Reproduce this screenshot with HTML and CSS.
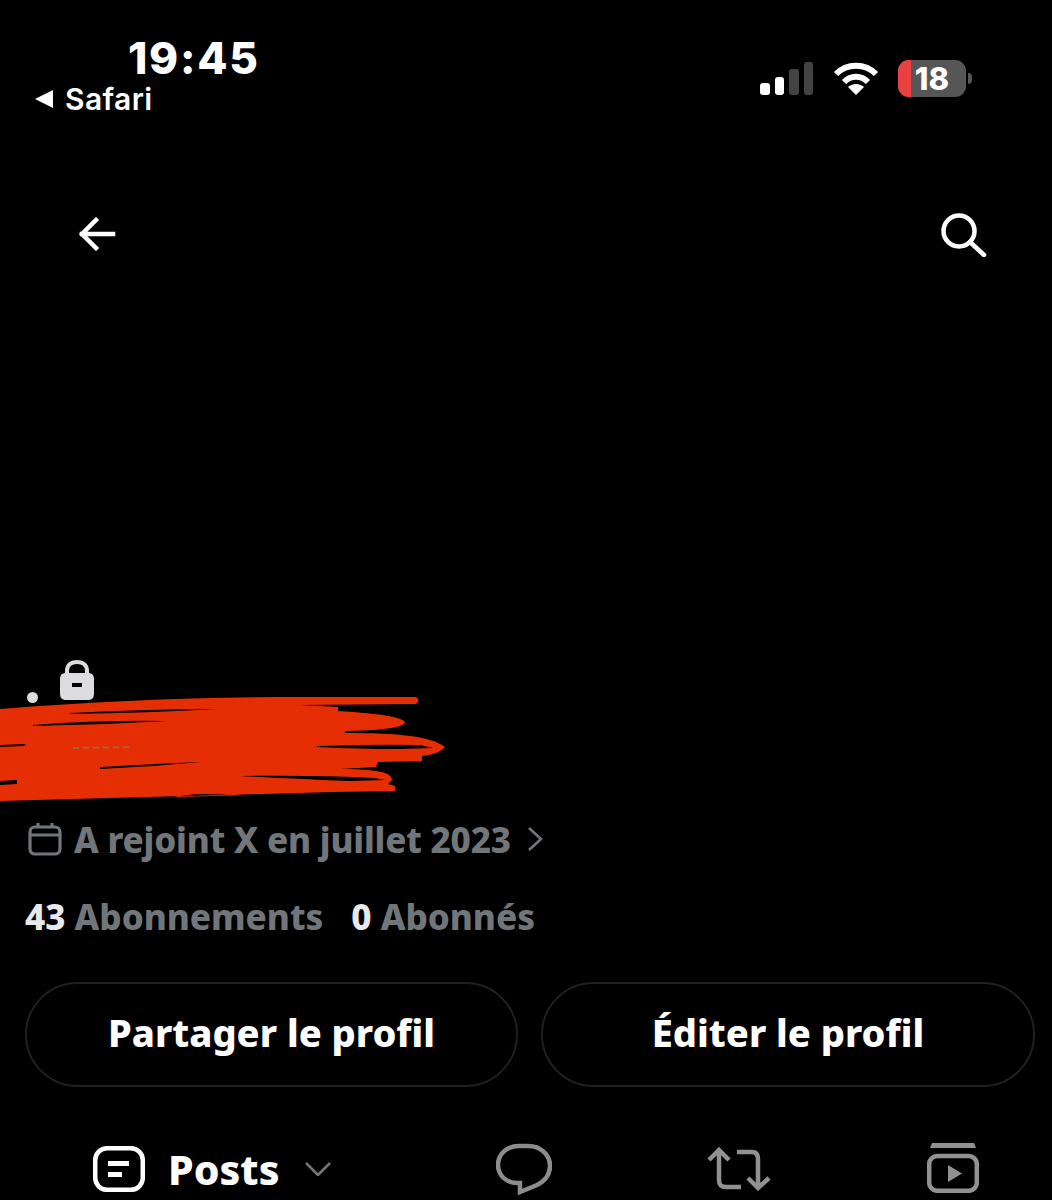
FILE: index.html
```html
<!DOCTYPE html>
<html lang="fr">
<head>
<meta charset="utf-8">
<title>Profil</title>
<link rel="stylesheet" href="styles.css">
</head>
<body>
<main class="screen">
  <header class="status">
    <div class="status-left">
      <div class="clock">19:45</div>
      <div class="back-app">
        <svg class="back-tri" viewBox="0 0 18 18"><path d="M0 9 18 0V18Z"/></svg>
        <span>Safari</span>
      </div>
    </div>
    <div class="status-right">
      <div class="signal">
        <i class="bar bar-1"></i><i class="bar bar-2"></i><i class="bar bar-3"></i><i class="bar bar-4"></i>
      </div>
      <svg class="wifi" viewBox="0 0 46 34" fill="none" stroke="#fff" stroke-width="6">
        <path d="M3 13C14 2 32 2 43 13"/>
        <path d="M11 21C18 14 28 14 35 21"/>
        <path d="M15 26 23 34 31 26C26 22 20 22 15 26Z" fill="#fff" stroke="none"/>
      </svg>
      <div class="battery">
        <i class="battery-low"></i>
        <span class="battery-level">18</span>
      </div>
      <i class="battery-tip"></i>
    </div>
  </header>

  <nav class="topnav">
    <svg class="nav-back" viewBox="0 0 38 34" fill="none" stroke="#fff" stroke-width="4.5" stroke-linecap="square">
      <path d="M35 17H4M18 3 4 17 18 31"/>
    </svg>
    <svg class="nav-search" viewBox="0 0 46 44" fill="none" stroke="#fff" stroke-width="4.5">
      <circle cx="18" cy="18" r="15.500"/>
      <path d="M29 29 43 42" stroke-linecap="round"/>
    </svg>
  </nav>

  <section class="identity">
    <div class="handle">
      <i class="handle-dot"></i>
      <svg class="lock" viewBox="0 0 36 41">
        <path d="M8 16V11C8 5 12 2 18 2S28 5 28 11V16" fill="none" stroke="#dcdcde" stroke-width="4"/>
        <path d="M7 13H29C33 13 35 15 35 19V33C35 38 33 40 29 40H7C3 40 1 38 1 33V19C1 15 3 13 7 13ZM13 23V27H23V23Z" fill="#dcdcde" fill-rule="evenodd"/>
      </svg>
    </div>
    <svg class="scribble" viewBox="0 0 446 106">
      <path fill="#e52e04" fill-rule="evenodd" d="M0 14C100 6 200 2 300 2L416 2Q421 5 416 9L300 10 338 12 338 16Q405 20 405 28Q400 35 345 36L345 38C400 38 430 41 445 52C440 58 430 60 422 61L422 66 378 67 376 72 340 74C380 74 392 78 392 85L388 89 395 91 395 96 333 97 0 106Z
      M70 18Q150 14 217 14Q150 18 70 19Z
      M33 30Q100 25 167 26Q100 30 33 31Z
      M317 51Q380 49 420 50L433 53 400 54Q360 54 317 52Z
      M100 72Q150 69 200 67Q150 72 100 74Z
      M240 81Q320 80 375 83L385 85 350 86Q300 84 240 81Z
      M0 86 17 85V89L0 90Z
      M0 50 26 49 24 51 0 52Z
      M175 102 250 100 200 99Q185 100 175 102Z"/>
      <path d="M73 53 133 52" stroke="#8d6f62" stroke-width="1.500" stroke-dasharray="6 4" fill="none"/>
    </svg>
  </section>

  <div class="joined">
    <svg class="calendar" viewBox="0 0 34 34" fill="none" stroke="#71767b" stroke-width="3.200">
      <rect x="2" y="5" width="30" height="27" rx="5"/>
      <path d="M2 13H32M10 1V6M24 1V6"/>
    </svg>
    <span>A rejoint X en juillet 2023</span>
    <svg class="chevron-right" viewBox="0 0 16 24" fill="none" stroke="#71767b" stroke-width="2.600">
      <path d="M2 1 14 12 2 23"/>
    </svg>
  </div>

  <div class="stats">
    <span class="stat"><b>43</b> Abonnements</span>
    <span class="stat"><b>0</b> Abonnés</span>
  </div>

  <div class="actions">
    <button class="action">Partager le profil</button>
    <button class="action">Éditer le profil</button>
  </div>

  <div class="tabs">
    <div class="tab-posts">
      <svg class="posts-icon" viewBox="0 0 52 46" fill="none" stroke="#fff" stroke-width="4.500">
        <rect x="2.200" y="2.200" width="47.600" height="41.600" rx="12"/>
        <path d="M15 17.500H36M15 28.500H29" stroke-width="5"/>
      </svg>
      <span class="posts-label">Posts</span>
      <svg class="chevron-down" viewBox="0 0 26 14" fill="none" stroke="#71767b" stroke-width="2.600">
        <path d="M1 1 13 13 25 1"/>
      </svg>
    </div>
    <svg class="tab-icon reply" viewBox="0 0 56 52" fill="none" stroke="#8c8c8c" stroke-width="4.500">
      <path d="M23 3H32C45 3 54 12 54 23C54 32 49 38 41 42L24 49V40H21C10 40 2 32 2 22C2 11 11 3 23 3Z"/>
    </svg>
    <svg class="tab-icon repost" viewBox="0 0 64 44" fill="none" stroke="#919191" stroke-width="4.500">
      <path d="M2 13 12 3 22 13M12 3V33C12 38 14 40 19 40H34"/>
      <path d="M30 5H45C49 5 51 7 51 12V41M41 31 51 41 62 31"/>
    </svg>
    <svg class="tab-icon video" viewBox="0 0 52 50" fill="#919191" stroke="none">
      <path d="M5 0H47L49 5H3Z"/>
      <rect x="2.200" y="13" width="47.600" height="34.800" rx="8" fill="none" stroke="#919191" stroke-width="4.500"/>
      <path d="M21 22 35 30.500 21 39Z"/>
    </svg>
  </div>
</main>
</body>
</html>
```

FILE: styles.css
```css
* { box-sizing: border-box; }

html, body {
  margin: 0;
  background: #000;
}

.screen {
  width: 1052px;
  height: 1200px;
  overflow: hidden;
  background: #000;
  color: #fff;
  font-family: "Noto Sans", "Liberation Sans", sans-serif;
}

/* Phone status bar */
.status {
  height: 130px;
  display: flex;
  justify-content: space-between;
  padding: 33px 80px 0 35px;
}

.status-left {
  display: flex;
  flex-direction: column;
  font-family: Inter, "Liberation Sans", sans-serif;
}

.clock {
  margin-left: 93px;
  font-size: 44px;
  line-height: 50px;
  font-weight: 800;
  letter-spacing: 1.7px;
}

.back-app {
  display: flex;
  align-items: center;
  gap: 12px;
  font-size: 30px;
  line-height: 32px;
  font-weight: 600;
  letter-spacing: 0.4px;
}

.back-tri {
  width: 18px;
  height: 18px;
  fill: #fff;
}

.status-right {
  display: flex;
  align-items: flex-start;
  padding-top: 27px;
}

.signal {
  display: flex;
  align-items: flex-end;
  gap: 5px;
  height: 33px;
  margin-top: 2px;
}

.bar {
  width: 9.5px;
  border-radius: 3px;
  background: #fff;
}

.bar-1 { height: 12px; }
.bar-2 { height: 18px; }
.bar-3 { height: 26px; background: #434343; }
.bar-4 { height: 33px; background: #434343; }

.wifi {
  width: 46px;
  height: 34px;
  margin: 1px 19px 0 20px;
}

.battery {
  position: relative;
  width: 68px;
  height: 37px;
  border-radius: 11px;
  overflow: hidden;
  background: #565656;
  display: flex;
  justify-content: center;
  align-items: center;
}

.battery-low {
  position: absolute;
  left: 0;
  top: 0;
  bottom: 0;
  width: 13px;
  background: #ea4040;
}

.battery-level {
  position: relative;
  font-family: Inter, "Liberation Sans", sans-serif;
  font-size: 31px;
  font-weight: 800;
  line-height: 37px;
}

.battery-tip {
  width: 4px;
  height: 11px;
  margin: 13px 0 0 2px;
  border-radius: 0 4px 4px 0;
  background: #565656;
}

/* Back and search row above the banner */
.topnav {
  height: 530px;
  display: flex;
  justify-content: space-between;
  align-items: flex-start;
  padding: 87px 65px 0 78px;
}

.nav-back {
  width: 38px;
  height: 34px;
}

.nav-search {
  width: 46px;
  height: 44px;
  margin-top: -4px;
}

/* Handle, with the display name struck out beneath it */
.identity {
  position: relative;
  height: 155px;
}

.handle {
  display: flex;
  align-items: flex-end;
  gap: 21px;
  padding-left: 27px;
  height: 41px;
}

.handle-dot {
  width: 11px;
  height: 11px;
  margin-bottom: -2px;
  border-radius: 50%;
  background: #dcdcde;
}

.lock {
  width: 36px;
  height: 41px;
}

.scribble {
  position: absolute;
  left: 0;
  top: 35px;
  width: 446px;
  height: 106px;
}

.joined {
  display: flex;
  align-items: center;
  height: 34px;
  margin-top: 7px;
  padding-left: 28px;
  color: #71767b;
  font-size: 35px;
  font-weight: 800;
  letter-spacing: -0.2px;
  white-space: nowrap;
}

.calendar {
  width: 34px;
  height: 34px;
  margin-right: 12px;
}

.chevron-right {
  width: 16px;
  height: 24px;
  margin-left: 16px;
}

.stats {
  display: flex;
  gap: 28px;
  height: 40px;
  margin-top: 41px;
  padding-left: 25px;
  color: #71767b;
  font-size: 35px;
  line-height: 40px;
  font-weight: 800;
  white-space: nowrap;
}

.stat b {
  color: #e7e9ea;
  font-weight: 800;
}

.actions {
  display: grid;
  grid-template-columns: 493px 494px;
  gap: 23px;
  margin-top: 45px;
  padding-left: 25px;
}

.action {
  height: 105px;
  padding-bottom: 6px;
  border: 2px solid #202020;
  border-radius: 53px;
  background: #000;
  color: #fff;
  font: 800 38px "Noto Sans", "Liberation Sans", sans-serif;
}

/* Profile tabs, cut off by the bottom edge */
.tabs {
  display: flex;
  align-items: flex-start;
  margin-top: 56px;
  padding-left: 93px;
}

.tab-posts {
  display: flex;
  align-items: center;
  flex: none;
  width: 238px;
  height: 46px;
  margin-top: 3px;
}

.posts-icon {
  width: 52px;
  height: 46px;
}

.posts-label {
  margin-left: 23px;
  font-size: 41px;
  font-weight: 800;
  line-height: 46px;
}

.chevron-down {
  width: 26px;
  height: 14px;
  margin-left: auto;
}

.tab-icon {
  flex: none;
}

.reply {
  width: 56px;
  height: 52px;
  margin-left: 165px;
}

.repost {
  width: 64px;
  height: 44px;
  margin: 4px 0 0 155px;
}

.video {
  width: 52px;
  height: 50px;
  margin-left: 156px;
}
```
